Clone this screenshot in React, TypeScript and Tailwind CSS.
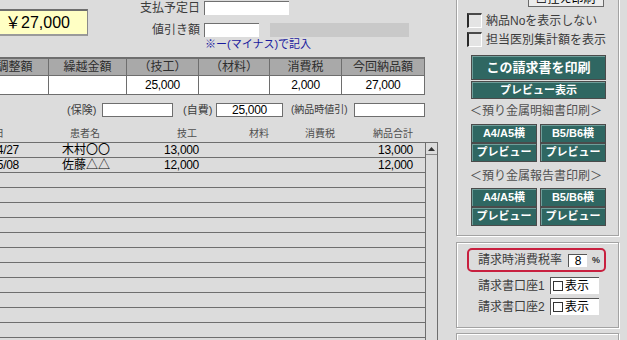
import React from "react";

function Check() {
  return (
    <div className="w-[15px] h-[15px] shrink-0 bg-[#e4e4e4] border-l-2 border-t-2 border-l-[#2a2a2a] border-t-[#4a4a4a] border-r border-b border-r-white border-b-white" />
  );
}

function Teal({ children, className }: { children: React.ReactNode; className: string }) {
  return (
    <div
      className={
        "flex items-center justify-center bg-[#2f6762] text-white font-bold border border-[#4b4b4b] shadow-[inset_1px_1px_0_#6f9e9a] leading-none " +
        className
      }
    >
      {children}
    </div>
  );
}

const rows = [
  { date: "04/27", name: "木村〇〇", gk: "13,000", total: "13,000" },
  { date: "05/08", name: "佐藤△△", gk: "12,000", total: "12,000" },
];

export default function App() {
  const empty = Array.from({ length: 11 });
  return (
    <div className="w-[627px] h-[340px] overflow-hidden bg-[#dcdcdc] flex font-['Liberation_Sans','Noto_Sans_CJK_JP',sans-serif] text-[#3c3c3c]">
      {/* LEFT */}
      <div className="w-[438px] shrink-0 flex flex-col">
        {/* top section */}
        <div className="h-[57px] flex">
          <div className="mt-[9px] h-[27px] w-[88px] shrink-0 bg-[#ffffc4] border-t-2 border-b-2 border-r border-t-[#6e6e6e] border-b-[#9a9a9a] border-r-[#8a8a8a] flex items-center pl-[5px] text-[16px] text-black leading-none">
            ￥27,000
          </div>
          <div className="flex flex-col pt-[1px]">
            <div className="flex h-[14px] items-center">
              <div className="w-[112px] text-right text-[12px] leading-none">支払予定日</div>
              <div className="ml-[4px] w-[85px] h-[14px] bg-white border-t border-l border-[#707070]" />
            </div>
            <div className="mt-[8px] flex h-[14px] items-center">
              <div className="w-[112px] text-right text-[12px] leading-none">値引き額</div>
              <div className="ml-[4px] w-[55px] h-[14px] bg-white border-t border-l border-[#707070]" />
              <div className="ml-[11px] w-[139px] h-[14px] bg-[#c9c9c9]" />
            </div>
            <div className="ml-[117px] mt-[1px] text-[11px] leading-[12px] text-[#1a1a9e]">※ー(マイナス)で記入</div>
          </div>
        </div>

        {/* summary table */}
        <div className="ml-[-19px] w-[444px] border-t-2 border-[#6e6e6e] text-[12px]">
          <div className="grid grid-cols-[68px_78px_72px_71px_72px_83px] bg-[#a9a9a9] text-[#2e2e2e]">
            {["調整額", "繰越金額", "（技工）", "（材料）", "消費税", "今回納品額"].map((t) => (
              <div key={t} className="h-[17px] border-b border-r border-[#6e6e6e] flex items-center justify-center leading-none">
                {t}
              </div>
            ))}
          </div>
          <div className="grid grid-cols-[68px_78px_72px_71px_72px_83px] bg-white text-black">
            {["", "", "25,000", "", "2,000", "27,000"].map((t, i) => (
              <div key={i} className="h-[19px] border-b border-r border-[#6e6e6e] flex items-center justify-center leading-none tracking-[-0.3px]">
                {t}
              </div>
            ))}
          </div>
        </div>

        {/* sub inputs */}
        <div className="mt-[8px] h-[14px] flex items-center text-[11px] leading-none">
          <div className="ml-[67px] w-[31px]">(保険)</div>
          <div className="ml-[4px] w-[71px] h-[14px] bg-white border border-[#6e6e6e]" />
          <div className="ml-[10px] w-[31px]">(自費)</div>
          <div className="ml-[2px] w-[67px] h-[14px] bg-white border border-[#6e6e6e] flex items-center justify-center text-[12px] text-black tracking-[-0.3px]">
            25,000
          </div>
          <div className="ml-[8px] w-[62px] text-[10px]">(納品時値引)</div>
          <div className="ml-[1px] w-[71px] h-[14px] bg-white border border-[#6e6e6e]" />
        </div>

        {/* list header */}
        <div className="mt-[8px] h-[17px] flex items-center text-[10px] text-[#505050] leading-none">
          <div className="ml-[-40px] w-[60px] text-right pr-[16px]">納品日</div>
          <div className="w-[120px] pl-[50px]">患者名</div>
          <div className="w-[60px] text-right pr-[3px]">技工</div>
          <div className="w-[70px] text-right pr-[1px]">材料</div>
          <div className="w-[66px] text-right pr-[1px]">消費税</div>
          <div className="w-[78px] text-right pr-[1px]">納品合計</div>
        </div>

        {/* list */}
        <div className="flex border-t border-[#6e6e6e] flex-1">
          <div className="w-[425px] flex flex-col text-[12px] text-black">
            {rows.map((r) => (
              <div key={r.date} className="h-[15px] shrink-0 border-b border-[#6e6e6e] flex items-center leading-none">
                <div className="ml-[-40px] w-[60px] text-right pr-[1px] tracking-[-0.3px]">{r.date}</div>
                <div className="w-[120px] pl-[42px]">{r.name}</div>
                <div className="w-[60px] text-right pr-[1px] tracking-[-0.3px]">{r.gk}</div>
                <div className="w-[70px]" />
                <div className="w-[66px]" />
                <div className="w-[78px] text-right pr-[1px] tracking-[-0.3px]">{r.total}</div>
              </div>
            ))}
            {empty.map((_, i) => (
              <div key={i} className="h-[15px] shrink-0 border-b border-[#6e6e6e]" />
            ))}
          </div>
          <div className="w-[13px] border-l border-r border-[#6e6e6e] flex flex-col">
            <div className="h-[12px] border-b border-[#8a8a8a] flex items-center justify-center">
              <svg width="7" height="4" viewBox="0 0 7 4">
                <path d="M0 4 L3.5 0 L7 4 Z" fill="#333" />
              </svg>
            </div>
          </div>
        </div>
      </div>

      {/* RIGHT */}
      <div className="ml-[18px] w-[163px] shrink-0 flex flex-col">
        <div className="-mt-[21px] h-[257px] shrink-0 border border-[#a3a3a3] shadow-[inset_1px_1px_0_#ffffff,1px_1px_0_#ffffff] flex flex-col pl-[10px]">
          <div className="self-end mr-[14px] mt-[9px] w-[76px] h-[18px] bg-[#ececec] border border-[#6a6a6a] flex items-end justify-center pb-[1px] text-[12px] text-black leading-none">
            ☐控え印刷
          </div>
          <div className="mt-[6px] h-[15px] flex items-center gap-[4px] text-[12px] leading-none">
            <Check />
            <span>納品Noを表示しない</span>
          </div>
          <div className="mt-[4px] h-[15px] flex items-center gap-[4px] text-[12px] leading-none">
            <Check />
            <span>担当医別集計額を表示</span>
          </div>
          <Teal className="mt-[8px] ml-[4px] w-[135px] h-[25px] text-[13px]">この請求書を印刷</Teal>
          <Teal className="mt-[1px] ml-[4px] w-[135px] h-[18px] text-[11px]">プレビュー表示</Teal>
          <div className="mt-[5px] h-[14px] w-[138px] text-center text-[12px] leading-[14px] text-[#505050]">
            ＜預り金属明細書印刷＞
          </div>
          <div className="mt-[6px] ml-[4px] grid grid-cols-[66px_66px] gap-x-[3px]">
            <Teal className="h-[19px] text-[11px]">A4/A5横</Teal>
            <Teal className="h-[19px] text-[11px]">B5/B6横</Teal>
            <Teal className="h-[19px] text-[11px]">プレビュー</Teal>
            <Teal className="h-[19px] text-[11px]">プレビュー</Teal>
          </div>
          <div className="mt-[7px] h-[14px] w-[138px] text-center text-[12px] leading-[14px] text-[#505050]">
            ＜預り金属報告書印刷＞
          </div>
          <div className="mt-[5px] ml-[4px] grid grid-cols-[66px_66px] gap-x-[3px]">
            <Teal className="h-[19px] text-[11px]">A4/A5横</Teal>
            <Teal className="h-[19px] text-[11px]">B5/B6横</Teal>
            <Teal className="h-[19px] text-[11px]">プレビュー</Teal>
            <Teal className="h-[19px] text-[11px]">プレビュー</Teal>
          </div>
        </div>

        <div className="mt-[6px] h-[86px] shrink-0 border border-[#a3a3a3] shadow-[inset_1px_1px_0_#ffffff,1px_1px_0_#ffffff] flex flex-col">
          <div className="mt-[5px] ml-[10px] w-[139px] h-[24px] border-2 border-[#c8203f] rounded-[5px] flex items-center pl-[9px] text-[12px] leading-none">
            <span>請求時消費税率</span>
            <div className="ml-[6px] w-[19px] h-[13px] bg-white border-t border-l border-[#555555] flex items-center justify-center text-black">
              8
            </div>
            <span className="ml-[5px] text-[9px] font-bold text-[#333333]">%</span>
          </div>
          {["請求書口座1", "請求書口座2"].map((t, i) => (
            <div key={t} className={"flex items-center h-[17px] ml-[21px] text-[12px] leading-none " + (i === 0 ? "mt-[5px]" : "mt-[4px]")}>
              <span className="w-[68px]">{t}</span>
              <div className="ml-[4px] w-[49px] h-[17px] bg-white border-t border-l border-[#555555] flex items-center pl-[2px] text-black">
                <div className="w-[10px] h-[10px] border border-[#333333] bg-white" />
                <span className="ml-[2px]">表示</span>
              </div>
            </div>
          ))}
        </div>

        <div className="mt-[5px] h-[30px] shrink-0 border border-[#a3a3a3] shadow-[inset_1px_1px_0_#ffffff,1px_1px_0_#ffffff]" />
      </div>
    </div>
  );
}
